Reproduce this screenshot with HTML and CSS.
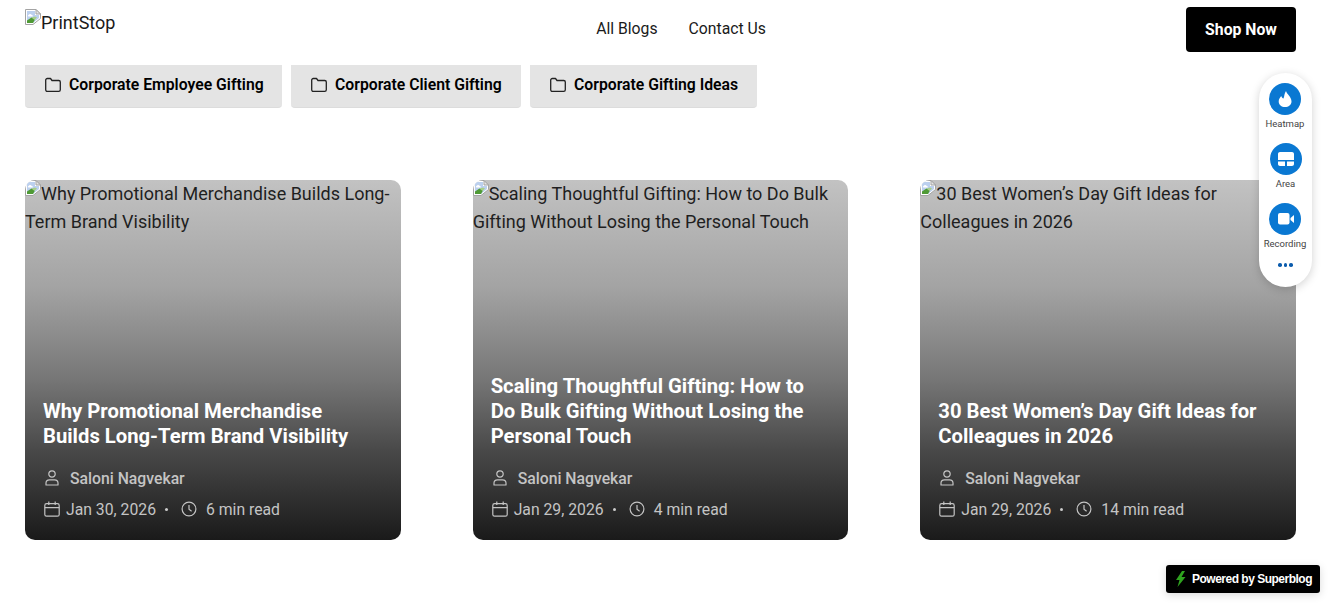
FILE: index.html
```html
<!DOCTYPE html>
<html>
<head>
    <title>PrintStop Blog</title>
    <link rel="stylesheet" href="styles.css">
</head>
<body>
    <svg class="sprites" width="0" height="0">
        <symbol id="broken" viewBox="0 0 16 16">
            <path d="M0.500 15.500V0.500H11L15.500 5V9.500L8 15.500Z" fill="#fff" stroke="#a3a3a3"/>
            <path d="M11 0.500V5H15.500Z" fill="#e4e4e4" stroke="#a3a3a3"/>
            <path d="M2 2H10V6H14V9L8 14H2Z" fill="#bcd0ee"/>
            <path d="M3.500 6C4.200 4.800 6 4.800 6.800 6C7.800 6 8.200 7 7.500 7.500H3.500C2.800 7.200 2.800 6.200 3.500 6Z" fill="#fff"/>
            <path d="M2 14V11.500L6.500 8.500L10 10.500L8 14Z" fill="#4f9a35"/>
            <path d="M6.500 8.500L10 7.500L12 8.500L9.500 11Z" fill="#a9cf8b"/>
        </symbol>
        <symbol id="folder" viewBox="0 0 16 16">
            <path d="M0.700 3C0.700 2 1.500 1.500 2.300 1.500H5.500L7 3.500H13.700C14.600 3.500 15.300 4.200 15.300 5V12.800C15.300 13.700 14.600 14.400 13.700 14.400H2.300C1.400 14.400 0.700 13.700 0.700 12.800Z" fill="none" stroke="currentColor" stroke-width="1.300" stroke-linejoin="round"/>
        </symbol>
        <symbol id="user" viewBox="0 0 16 16">
            <circle cx="8" cy="4" r="3.200" fill="none" stroke="currentColor" stroke-width="1.200"/>
            <path d="M2 15V13C2 11 3.500 9.800 5.500 9.800H10.500C12.500 9.800 14 11 14 13V15Z" fill="none" stroke="currentColor" stroke-width="1.200" stroke-linejoin="round"/>
        </symbol>
        <symbol id="calendar" viewBox="0 0 16 16">
            <rect x="0.800" y="2.600" width="14.400" height="12.600" rx="1.800" fill="none" stroke="currentColor" stroke-width="1.200"/>
            <path d="M0.800 6.600H15.200M4.800 0.600V4M11.200 0.600V4" fill="none" stroke="currentColor" stroke-width="1.200"/>
        </symbol>
        <symbol id="clock" viewBox="0 0 16 16">
            <circle cx="8" cy="8" r="6.900" fill="none" stroke="currentColor" stroke-width="1.200"/>
            <path d="M8 4V8.300L10.600 10.200" fill="none" stroke="currentColor" stroke-width="1.200"/>
        </symbol>
    </svg>

    <header class="site-header">
        <a class="logo"><svg class="broken-img"><use href="#broken"/></svg>PrintStop</a>
        <nav class="nav">
            <a>All Blogs</a>
            <a>Contact Us</a>
        </nav>
        <a class="shop-btn">Shop Now</a>
    </header>

    <main class="content">
        <div class="categories">
            <a class="category"><svg class="folder-icon"><use href="#folder"/></svg>Corporate Employee Gifting</a>
            <a class="category"><svg class="folder-icon"><use href="#folder"/></svg>Corporate Client Gifting</a>
            <a class="category"><svg class="folder-icon"><use href="#folder"/></svg>Corporate Gifting Ideas</a>
        </div>

        <div class="cards">
            <article class="card">
                <div class="card-alt"><svg class="broken-img"><use href="#broken"/></svg>Why Promotional Merchandise Builds Long-Term Brand Visibility</div>
                <div class="card-body">
                    <h2>Why Promotional Merchandise Builds Long-Term Brand Visibility</h2>
                    <div class="author"><svg class="meta-icon"><use href="#user"/></svg>Saloni Nagvekar</div>
                    <div class="meta">
                        <svg class="meta-icon"><use href="#calendar"/></svg><span>Jan 30, 2026</span>
                        <i class="dot"></i>
                        <svg class="meta-icon"><use href="#clock"/></svg><span>6 min read</span>
                    </div>
                </div>
            </article>
            <article class="card">
                <div class="card-alt"><svg class="broken-img"><use href="#broken"/></svg>Scaling Thoughtful Gifting: How to Do Bulk Gifting Without Losing the Personal Touch</div>
                <div class="card-body">
                    <h2>Scaling Thoughtful Gifting: How to Do Bulk Gifting Without Losing the Personal Touch</h2>
                    <div class="author"><svg class="meta-icon"><use href="#user"/></svg>Saloni Nagvekar</div>
                    <div class="meta">
                        <svg class="meta-icon"><use href="#calendar"/></svg><span>Jan 29, 2026</span>
                        <i class="dot"></i>
                        <svg class="meta-icon"><use href="#clock"/></svg><span>4 min read</span>
                    </div>
                </div>
            </article>
            <article class="card">
                <div class="card-alt"><svg class="broken-img"><use href="#broken"/></svg>30 Best Women’s Day Gift Ideas for Colleagues in 2026</div>
                <div class="card-body">
                    <h2>30 Best Women’s Day Gift Ideas for Colleagues in 2026</h2>
                    <div class="author"><svg class="meta-icon"><use href="#user"/></svg>Saloni Nagvekar</div>
                    <div class="meta">
                        <svg class="meta-icon"><use href="#calendar"/></svg><span>Jan 29, 2026</span>
                        <i class="dot"></i>
                        <svg class="meta-icon"><use href="#clock"/></svg><span>14 min read</span>
                    </div>
                </div>
            </article>
        </div>
    </main>

    <aside class="widget">
        <div class="tool tool-left">
            <span class="tool-btn">
                <svg width="32" height="32" viewBox="0 0 32 32"><path d="M17 8C17.500 11 22.500 13.500 22.500 18.500C22.500 22 19.500 24 16 24C12.500 24 9.700 22 9.700 18.500C9.700 16 11 14.500 12.200 13C12.800 14.500 13.500 15.200 14.500 15.500C15.500 13 15.200 10.500 17 8Z" fill="#fff"/></svg>
            </span>
            <span>Heatmap</span>
        </div>
        <div class="tool">
            <span class="tool-btn">
                <svg width="32" height="32" viewBox="0 0 32 32"><path d="M10 9H22C23.100 9 24 9.900 24 11V17H8V11C8 9.900 8.900 9 10 9ZM8 18.500H15V23H10C8.900 23 8 22.100 8 21ZM17 18.500H24V21C24 22.100 23.100 23 22 23H17Z" fill="#fff"/></svg>
            </span>
            <span>Area</span>
        </div>
        <div class="tool tool-left">
            <span class="tool-btn">
                <svg width="32" height="32" viewBox="0 0 32 32"><rect x="9" y="10" width="11.500" height="11.500" rx="2" fill="#fff"/><path d="M21.500 15L25 12V20L21.500 17Z" fill="#fff"/></svg>
            </span>
            <span>Recording</span>
        </div>
        <div class="more"><i></i><i></i><i></i></div>
    </aside>

    <a class="powered">
        <svg width="12" height="16" viewBox="0 0 12 16"><path d="M7 0L1 9H4.500L2.500 16L10.500 6H6.500L10 0Z" fill="#2fa31f"/></svg>
        Powered by Superblog
    </a>
</body>
</html>
```

FILE: styles.css
```css
* {
    box-sizing: border-box;
}
body {
    margin: 0;
    font-family: Roboto, Arial, sans-serif;
    color: #1a1a1a;
    background: #fff;
    overflow: hidden;
}
.sprites {
    position: absolute;
}
.broken-img {
    width: 16px;
    height: 16px;
    vertical-align: top;
}
.site-header {
    display: flex;
    justify-content: space-between;
    height: 65px;
    padding: 7px 38px 0 25px;
}
.logo {
    width: 306px;
    padding-top: 2px;
    font-size: 18px;
    line-height: 28px;
}
.nav {
    display: flex;
    gap: 31px;
    height: 43px;
    align-items: center;
    margin-right: 155px;
    font-size: 15.75px;
}
.shop-btn {
    width: 110px;
    height: 45px;
    line-height: 45px;
    text-align: center;
    background: #000;
    color: #fff;
    font-size: 15.75px;
    font-weight: 700;
    border-radius: 4px;
}
.content {
    padding: 0 38px 0 25px;
}
.categories {
    display: grid;
    grid-template-columns: 257px 230px 227px;
    gap: 9px;
}
.category {
    display: flex;
    align-items: center;
    gap: 8px;
    height: 43px;
    padding: 0 0 4px 20px;
    background: #e4e4e4;
    border-bottom: 1px solid #dcdcdc;
    border-radius: 0 0 4px 4px;
    color: #000;
    font-size: 15.75px;
    font-weight: 600;
}
.folder-icon {
    width: 16px;
    height: 16px;
    margin-top: 1px;
    color: #222;
}
.cards {
    display: grid;
    grid-template-columns: repeat(3, 1fr);
    gap: 72px;
    margin-top: 72px;
}
.card {
    position: relative;
    height: 360px;
    border-radius: 10px;
    overflow: hidden;
    background: linear-gradient(180deg, #c2c2c2 0%, #a3a3a3 30%, #777 55%, #494949 75%, #1a1a1a 100%);
}
.card-alt {
    font-size: 18px;
    line-height: 28px;
    color: #1f1f1f;
}
.card-body {
    position: absolute;
    left: 18px;
    right: 18px;
    bottom: 20px;
}
.card-body h2 {
    margin: 0 0 18px;
    color: #fff;
    font-size: 20.25px;
    line-height: 25px;
    font-weight: 700;
}
.author {
    display: flex;
    align-items: center;
    gap: 10px;
    height: 22px;
    padding-left: 1px;
    color: #c4c4c4;
    font-size: 15.75px;
    font-weight: 500;
}
.meta {
    display: flex;
    align-items: center;
    height: 22px;
    margin-top: 9px;
    padding-left: 1px;
    color: #c4c4c4;
    font-size: 15.75px;
}
.meta-icon {
    width: 16px;
    height: 16px;
    flex: none;
}
.meta .meta-icon {
    margin-right: 6px;
}
.meta .dot + .meta-icon {
    margin-right: 9px;
}
.dot {
    width: 3px;
    height: 3px;
    margin: 0 13px 0 9px;
    border-radius: 50%;
    background: #ccc;
}
.widget {
    position: absolute;
    left: 1259px;
    top: 73px;
    width: 53px;
    height: 214px;
    padding-top: 10px;
    background: #fff;
    border-radius: 27px;
    box-shadow: 0 2px 10px rgba(0, 0, 0, 0.18);
    display: flex;
    flex-direction: column;
    align-items: center;
    gap: 11px;
}
.tool {
    display: flex;
    flex-direction: column;
    align-items: center;
    color: #444;
    font-size: 9.5px;
    line-height: 13px;
    height: 49px;
}
.tool-left {
    margin-right: 1px;
}
.tool-btn {
    width: 32px;
    height: 32px;
    margin-bottom: 2px;
    border-radius: 50%;
    background: #0a78d2;
}
.more {
    display: flex;
    gap: 2px;
}
.more i {
    width: 3.500px;
    height: 3.500px;
    border-radius: 50%;
    background: #0b5cad;
}
.powered {
    position: absolute;
    left: 1166px;
    top: 565px;
    width: 154px;
    height: 28px;
    display: flex;
    align-items: center;
    gap: 5px;
    padding-left: 9px;
    background: #000;
    color: #fff;
    border-radius: 3px;
    box-shadow: 0 2px 8px rgba(0, 0, 0, 0.15);
    font-family: "Liberation Sans", Arial, sans-serif;
    font-size: 12px;
    font-weight: 700;
    letter-spacing: -0.5px;
}
```
